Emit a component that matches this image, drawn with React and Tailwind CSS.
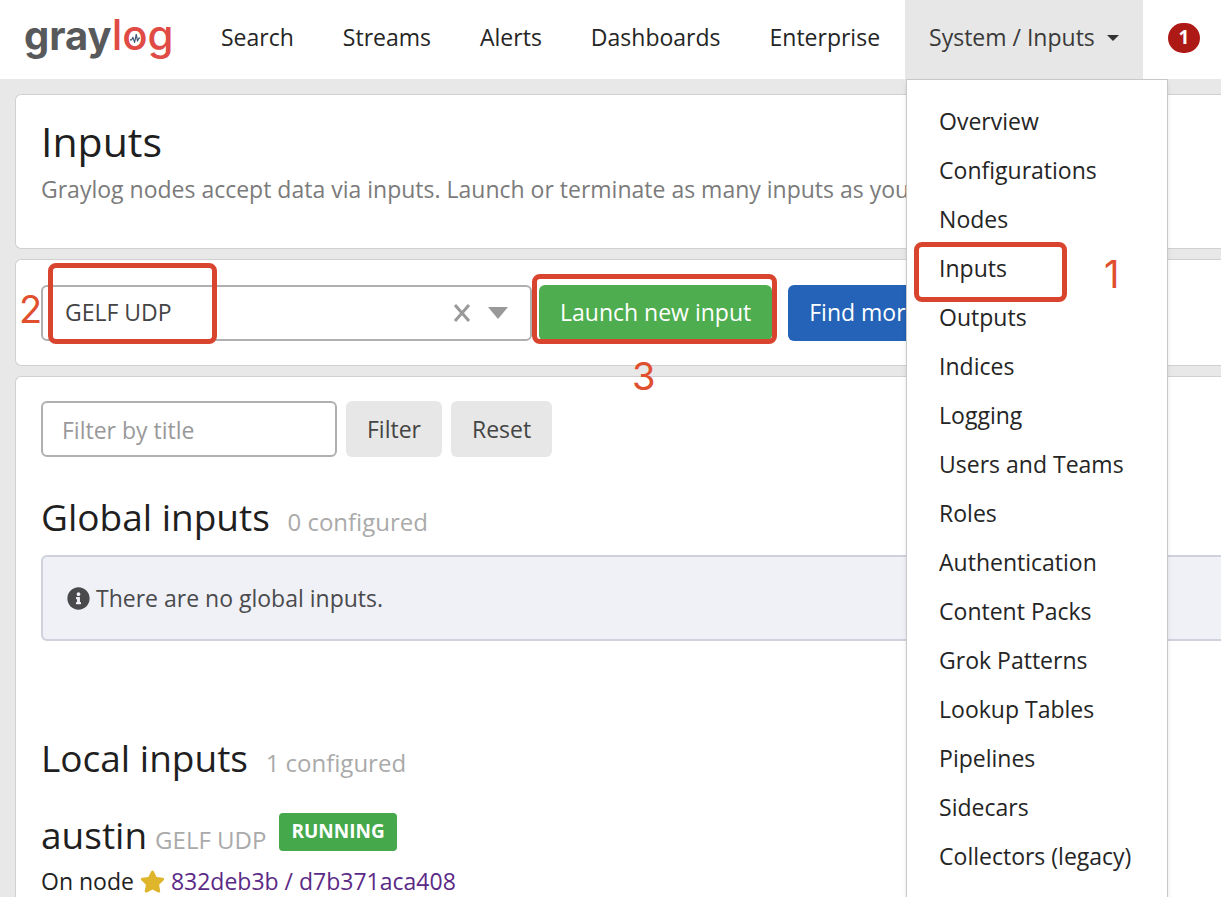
import { FaInfoCircle, FaStar } from 'react-icons/fa'

const NAV_LINKS = ['Search', 'Streams', 'Alerts', 'Dashboards', 'Enterprise']

const SYSTEM_MENU = [
  'Overview',
  'Configurations',
  'Nodes',
  'Inputs',
  'Outputs',
  'Indices',
  'Logging',
  'Users and Teams',
  'Roles',
  'Authentication',
  'Content Packs',
  'Grok Patterns',
  'Lookup Tables',
  'Pipelines',
  'Sidecars',
  'Collectors (legacy)',
]

function Logo() {
  return (
    <a href="#" className="flex w-[149px] items-baseline font-['Inter',sans-serif] leading-[40px] whitespace-nowrap">
      <span className="text-[40px] font-bold text-[#58595b]">gray</span>
      <span className="text-[42px] font-medium text-[#e04b45]">
        l
        <span className="relative">
          o
          {/* pulse inside the o */}
          <svg viewBox="0 0 12 12" className="absolute left-[8px] top-[25px] size-[10px]" fill="none" stroke="#3f5673" strokeWidth="1.4" strokeLinejoin="round" aria-hidden="true">
            <path d="M0 7h2l1.500-3 2 6 2-9.500 1.500 8L10.500 5H12" />
          </svg>
        </span>
        g
      </span>
    </a>
  )
}

function Mark({ className }) {
  return <span className={`absolute z-20 pointer-events-none rounded-lg border-5 border-[#d9442f] ${className}`} />
}

function Step({ children, className }) {
  return (
    <span className={`absolute z-20 font-['Inter',sans-serif] font-normal text-[38px] leading-[40px] text-[#e0502f] ${className}`}>
      {children}
    </span>
  )
}

function Navbar() {
  return (
    <header className="flex h-[79px] items-stretch bg-white pl-6 text-[#252525]">
      <div className="flex shrink-0 items-center pb-2">
        <Logo />
      </div>
      <nav className="ml-6 flex shrink-0 items-stretch gap-px">
        {NAV_LINKS.map((label) => (
          <a key={label} href="#" className="flex items-center px-6 pb-1">
            {label}
          </a>
        ))}
        <div className="relative flex">
          <button type="button" className="flex items-center gap-3 bg-[#e7e7e7] px-6 pb-1 text-[#3a3a3a]">
            System / Inputs
            <svg viewBox="0 0 12 6" className="h-[6px] w-3" fill="#333" aria-hidden="true">
              <path d="M0 0h12L6 6z" />
            </svg>
          </button>
          <SystemMenu />
        </div>
      </nav>
      <div className="flex items-center pb-1 pl-[25px]">
        <span className="flex h-[30px] w-8 items-center justify-center rounded-full bg-[#ad1a15] text-[19px] font-bold text-white">1</span>
      </div>
    </header>
  )
}

function SystemMenu() {
  return (
    <ul className="absolute left-px top-full z-10 w-[262px] border border-[#c9c9c9] bg-white pt-[17px] pb-6 shadow-md">
      {SYSTEM_MENU.map((label) => (
        <li key={label} className="relative">
          <a href="#" className="block px-8 leading-[49px] whitespace-nowrap">
            {label}
          </a>
          {label === 'Inputs' && (
            <>
              <Mark className="left-[7px] -top-[2px] h-[60px] w-[153px]" />
              <Step className="left-[197px] top-[10px]">1</Step>
            </>
          )}
        </li>
      ))}
    </ul>
  )
}

function Panel({ className, children }) {
  return (
    <section className={`rounded-l-md border border-r-0 border-[#d0d0d0] bg-white pl-[25px] ${className}`}>
      {children}
    </section>
  )
}

function LaunchBar() {
  return (
    <Panel className="flex h-[107px] items-center">
      <div className="relative flex h-14 w-[491px] items-center rounded-md border-2 border-[#b0b0b0] bg-white pr-[21px]">
        <select aria-label="Select input" defaultValue="gelf-udp" className="h-full flex-1 appearance-none pl-[22px] text-[#444] outline-none">
          <option value="gelf-udp">GELF UDP</option>
        </select>
        <button type="button" aria-label="Clear" className="mr-4">
          <svg viewBox="0 0 18 18" className="size-[18px]" fill="none" stroke="#999" strokeWidth="3" aria-hidden="true">
            <path d="M2 1l14 16M16 1L2 17" />
          </svg>
        </button>
        <svg viewBox="0 0 22 12" className="h-3 w-[22px]" fill="#999" aria-hidden="true">
          <path d="M1 0h20L11 12z" />
        </svg>
        <Mark className="left-[5px] -top-6 h-[81px] w-[169px]" />
        <Step className="-left-[24px] top-[2px]">2</Step>
      </div>
      <div className="relative ml-[7px]">
        <button type="button" className="h-14 rounded-md bg-[#4dad4f] px-[21px] whitespace-nowrap text-white">
          Launch new input
        </button>
        <Mark className="-left-[7px] -right-[5px] -top-[11px] -bottom-[3px]" />
        <Step className="left-[93px] top-[71px]">3</Step>
      </div>
      <button type="button" className="ml-4 h-14 rounded-md bg-[#2463b8] px-[21px] whitespace-nowrap text-white">
        Find more inputs
      </button>
    </Panel>
  )
}

function SectionTitle({ title, count }) {
  return (
    <h2 className="text-[37px] leading-[50px] text-[#1f1f1f]">
      {title} <small className="ml-2 text-[24px] text-[#aaa]">{count}</small>
    </h2>
  )
}

export default function App() {
  return (
    <div className="h-screen overflow-hidden bg-[#e8e8e8] font-['Open_Sans',sans-serif] text-[23px] text-[#1f1f1f]">
      <Navbar />
      <main className="flex flex-col gap-[10px] pl-[15px] pt-[15px]">
        <Panel className="h-[155px] pt-[18px]">
          <h1 className="text-[41px] leading-[56px]">Inputs</h1>
          <p className="leading-10 whitespace-nowrap text-[#7b7b7b]">
            Graylog nodes accept data via inputs. Launch or terminate as many inputs as you want here.
          </p>
        </Panel>

        <LaunchBar />

        <Panel className="pt-6 pb-10">
          <form className="flex gap-[9px]" onSubmit={(e) => e.preventDefault()}>
            <input
              type="text"
              aria-label="Filter by title"
              placeholder="Filter by title"
              className="h-14 w-[296px] rounded-md border-2 border-[#b0b0b0] px-[19px] pt-px placeholder:text-[#999]"
            />
            <button type="submit" className="h-14 rounded-md bg-[#e7e7e7] px-[21px] text-[#444]">Filter</button>
            <button type="reset" className="h-14 rounded-md bg-[#e7e7e7] px-[21px] text-[#444]">Reset</button>
          </form>

          <div className="mt-[35px]">
            <SectionTitle title="Global inputs" count="0 configured" />
            <div className="mt-2 flex h-[86px] items-center gap-[6px] rounded-l-md border-2 border-r-0 border-[#cfd1dc] bg-[#f0f1f6] pl-6 text-[#4a4a4d]">
              <FaInfoCircle className="size-[23px]" />
              There are no global inputs.
            </div>
          </div>

          <div className="mt-[92px]">
            <SectionTitle title="Local inputs" count="1 configured" />
          </div>

          <div className="mt-[22px]">
            <h3 className="flex items-baseline text-[37px] leading-[50px]">
              austin
              <small className="ml-2 text-[24px] text-[#aaa]">GELF UDP</small>
              <span className="mt-[3px] ml-[13px] self-start rounded-sm bg-[#45a94c] px-3 pb-[2px] text-[19px] leading-[36px] font-bold text-white">RUNNING</span>
            </h3>
            <div className="flex items-center leading-8">
              On node
              <FaStar className="mx-[6px] size-[25px] text-[#dfb52c]" />
              <a href="#" className="text-[#5b2a86]">832deb3b / d7b371aca408</a>
            </div>
          </div>
        </Panel>
      </main>
    </div>
  )
}
